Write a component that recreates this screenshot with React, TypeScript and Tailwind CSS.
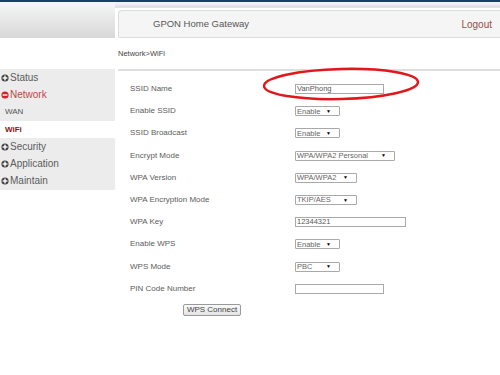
import React from 'react';

const font = { fontFamily: '"Liberation Sans", Arial, sans-serif' };

const PlusIcon = ({ open }: { open?: boolean }) => (
  <svg width="8" height="8" viewBox="0 0 8 8" className="shrink-0">
    <circle cx="4" cy="4" r="3.6" fill={open ? '#d4202a' : '#444'} />
    <rect x="1.6" y="3.3" width="4.8" height="1.4" fill="#fff" />
    {!open && <rect x="3.3" y="1.6" width="1.4" height="4.8" fill="#fff" />}
  </svg>
);

const MenuItem = ({ label, open }: { label: string; open?: boolean }) => (
  <div className="h-[17px] flex items-center pl-[1px] gap-[1px]">
    <PlusIcon open={open} />
    <span className={open ? 'text-[10px] text-[#b94a48]' : 'text-[10px] text-[#5c5c5c]'}>{label}</span>
  </div>
);

const Select = ({ value, width }: { value: string; width: string }) => (
  <div className={`${width} h-[10px] border border-[#a9a9a9] bg-white flex items-center justify-between pl-[1px] pr-[8px] rounded-[1px]`}>
    <span className="text-[7.5px] leading-none text-[#666]">{value}</span>
    <span className="text-[5px] leading-none text-black">▼</span>
  </div>
);

const Input = ({ value, width }: { value?: string; width: string }) => (
  <div className={`${width} h-[10px] border border-[#a9a9a9] bg-white flex items-center pl-[1px]`}>
    <span className="text-[7.5px] leading-none text-[#555]">{value}</span>
  </div>
);

const rows: { label: string; control: React.ReactNode }[] = [
  { label: 'SSID Name', control: <Input value="VanPhong" width="w-[89px]" /> },
  { label: 'Enable SSID', control: <Select value="Enable" width="w-[45px]" /> },
  { label: 'SSID Broadcast', control: <Select value="Enable" width="w-[45px]" /> },
  { label: 'Encrypt Mode', control: <Select value="WPA/WPA2 Personal" width="w-[100px]" /> },
  { label: 'WPA Version', control: <Select value="WPA/WPA2" width="w-[62px]" /> },
  { label: 'WPA Encryption Mode', control: <Select value="TKIP/AES" width="w-[62px]" /> },
  { label: 'WPA Key', control: <Input value="12344321" width="w-[111px]" /> },
  { label: 'Enable WPS', control: <Select value="Enable" width="w-[45px]" /> },
  { label: 'WPS Mode', control: <Select value="PBC" width="w-[45px]" /> },
  { label: 'PIN Code Number', control: <Input width="w-[89px]" /> },
];

export default function App() {
  return (
    <div className="relative w-[500px] h-[375px] bg-white overflow-hidden" style={font}>
      <div className="h-[2px] bg-[#1c3b6e]" />
      <div className="flex">
        {/* Sidebar */}
        <div className="w-[115px] shrink-0">
          <div className="h-[36px] bg-gradient-to-b from-[#f6f6f6] to-[#d8d8d8]" />
          <div className="h-[31px]" />
          <div className="bg-[#ececec]">
            <MenuItem label="Status" />
            <MenuItem label="Network" open />
            <div className="h-[18px] flex items-center pl-[5px] text-[8px] text-[#555]">WAN</div>
          </div>
          <div className="h-[17px] flex items-center pl-[5px] text-[8px] font-bold text-[#8b1414] bg-white">WiFi</div>
          <div className="bg-[#ececec] pb-[1px]">
            <MenuItem label="Security" />
            <MenuItem label="Application" />
            <MenuItem label="Maintain" />
          </div>
        </div>

        {/* Main */}
        <div className="flex-1">
          <div className="h-[3px] bg-[#f0f0f2]" />
          <div className="h-[3px] bg-[#e2e2e4]" />
          <div className="h-[2px] bg-white" />
          <div className="ml-[3px] h-[28px] bg-[#f5f5f5] border border-r-0 border-[#dcdcdc] rounded-tl-[4px] rounded-bl-[2px] flex items-center justify-between pl-[34px] pr-[8px]">
            <span className="text-[9.5px] text-[#555]">GPON Home Gateway</span>
            <span className="text-[10px] text-[#9b4a4a]">Logout</span>
          </div>
          <div className="ml-[3px] h-[31px] flex items-center text-[7.5px] text-[#444]">Network&gt;WiFi</div>
          <div className="ml-[3px] h-[2px] bg-[#dedede]" />
          <div className="ml-[3px] pt-[7px]">
            {rows.map((r) => (
              <div key={r.label} className="h-[22.2px] flex items-center">
                <div className="w-[177px] pl-[12px] text-[8px] text-[#5c5c5c]">{r.label}</div>
                {r.control}
              </div>
            ))}
            <div className="mt-[4px] ml-[65px] w-[58px] h-[12px] border border-[#9a9a9a] rounded-[2px] bg-gradient-to-b from-[#fafafa] to-[#e4e4e4] flex items-center justify-center text-[8px] text-[#444]">
              WPS Connect
            </div>
          </div>
        </div>
      </div>

      {/* Red annotation ellipse */}
      <svg className="absolute left-0 top-0 pointer-events-none" width="500" height="375">
        <ellipse cx="341" cy="84" rx="77" ry="15" fill="none" stroke="#e3161b" strokeWidth="2.5" transform="rotate(-1.5 341 84)" />
      </svg>
    </div>
  );
}
